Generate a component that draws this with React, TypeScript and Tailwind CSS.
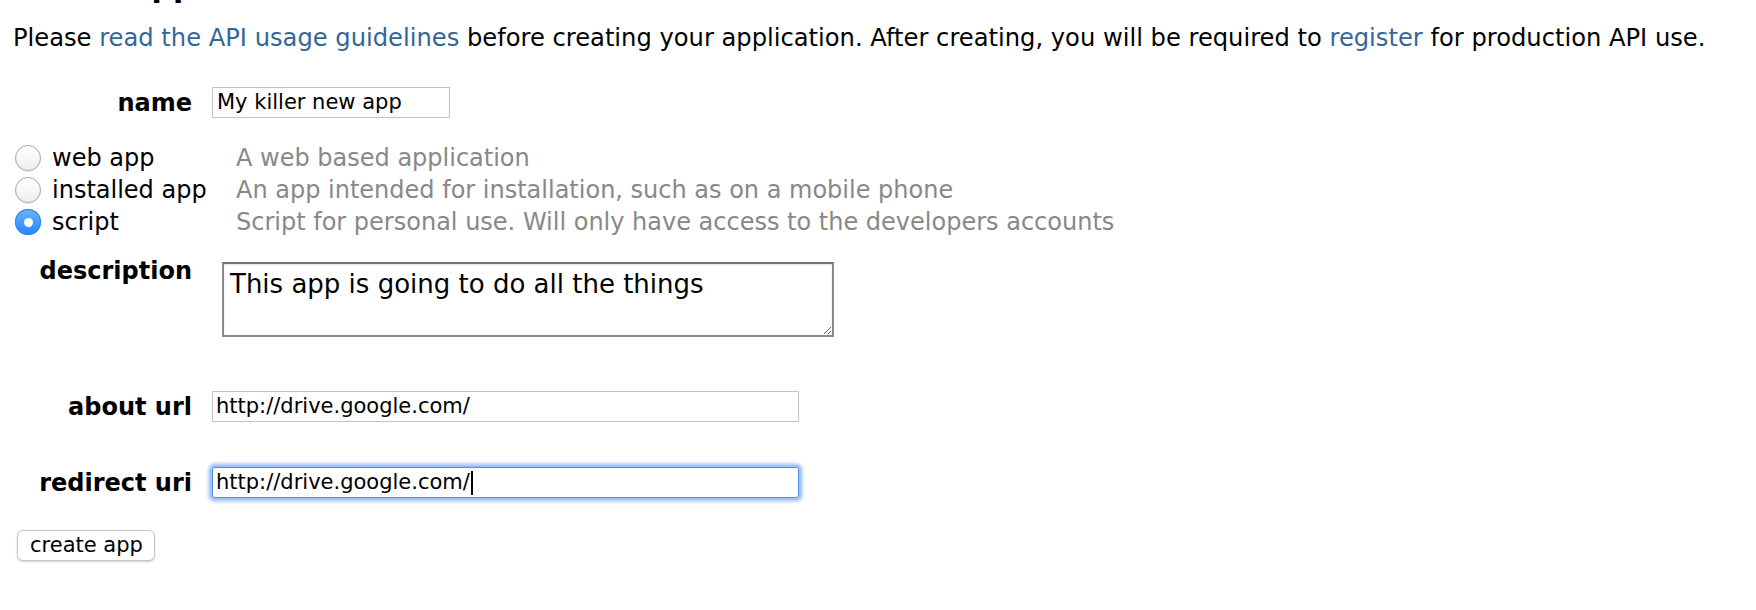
import React from "react";

function Radio({ checked }: { checked?: boolean }) {
  if (checked) {
    return (
      <span className="flex h-[26px] w-[26px] shrink-0 items-center justify-center rounded-full bg-gradient-to-b from-[#6cb3fa] to-[#1a86fb] shadow-[inset_0_0_0_1px_#2f84e6]">
        <span className="h-[9px] w-[9px] rounded-full bg-white" />
      </span>
    );
  }
  return (
    <span className="block h-[26px] w-[26px] shrink-0 rounded-full border border-[#aaaaaa] bg-gradient-to-b from-white to-[#eeeeee] shadow-[0_1px_1px_rgba(0,0,0,0.1)]" />
  );
}

function FieldLabel({ children }: { children: React.ReactNode }) {
  return <div className="w-[179px] shrink-0 text-right font-bold">{children}</div>;
}

export default function App() {
  return (
    <div className="min-h-[610px] overflow-hidden bg-white text-black">
      <div className="px-[13px] font-['DejaVu_Sans',Verdana,sans-serif] text-[24px] leading-[28px]">
        <h1 className="-mt-[31px] whitespace-nowrap text-[30px] font-bold leading-[35px]">create application</h1>

        <p className="mt-[20px] whitespace-nowrap text-[24.2px]">
          Please <a className="text-[#369]">read the API usage guidelines</a> before creating your application. After
          creating, you will be required to <a className="text-[#369]">register</a> for production API use.
        </p>

        <div className="mt-[35px] flex items-center">
          <FieldLabel>name</FieldLabel>
          <div className="ml-[20px] flex h-[31px] w-[238px] items-center border border-[#c3c3c3] pl-[4px] text-[21px] leading-[25px]">
            My killer new app
          </div>
        </div>

        <div className="mt-[24px]">
          {[
            { label: "web app", desc: "A web based application", checked: false },
            { label: "installed app", desc: "An app intended for installation, such as on a mobile phone", checked: false },
            { label: "script", desc: "Script for personal use. Will only have access to the developers accounts", checked: true },
          ].map((r) => (
            <div key={r.label} className="flex h-[32px] items-center whitespace-nowrap">
              <span className="ml-[2px]">
                <Radio checked={r.checked} />
              </span>
              <span className="ml-[11px] w-[184px]">{r.label}</span>
              <span className="text-[#888]">{r.desc}</span>
            </div>
          ))}
        </div>

        <div className="mt-[19px] flex items-start">
          <FieldLabel>description</FieldLabel>
          <textarea
            readOnly
            defaultValue="This app is going to do all the things"
            className="ml-[30px] mt-[5px] h-[75px] w-[612px] resize border-2 border-[#8a8a8a] border-t-[#737373] bg-white pl-[6px] pt-[5px] font-['DejaVu_Sans',Verdana,sans-serif] text-[26px] leading-[30px] text-black outline-none shadow-[inset_0_1px_2px_rgba(0,0,0,0.12)]"
          />
        </div>

        <div className="mt-[54px] flex items-center">
          <FieldLabel>about url</FieldLabel>
          <div className="ml-[20px] flex h-[31px] w-[587px] items-center border border-[#c3c3c3] pl-[3px] text-[21px] leading-[25px]">
            http://drive.google.com/
          </div>
        </div>

        <div className="mt-[45px] flex items-center">
          <FieldLabel>redirect uri</FieldLabel>
          <div className="ml-[20px] flex h-[31px] w-[587px] items-center rounded-[3px] border border-[#4d8fe0] pl-[3px] text-[21px] leading-[25px] shadow-[0_0_0_2px_#9cc3fa,0_0_3px_4px_rgba(120,170,245,0.55)]">
            http://drive.google.com/
            <span className="ml-[1px] inline-block h-[24px] w-[2px] bg-black" />
          </div>
        </div>

        <button className="ml-[4px] mt-[32px] flex h-[31px] w-[138px] items-center rounded-[6px] border border-[#c6c6c6] bg-white pl-[12px] text-[21px] leading-[25px] text-black shadow-[0_1px_2px_rgba(0,0,0,0.2)]">
          create app
        </button>
      </div>
    </div>
  );
}
